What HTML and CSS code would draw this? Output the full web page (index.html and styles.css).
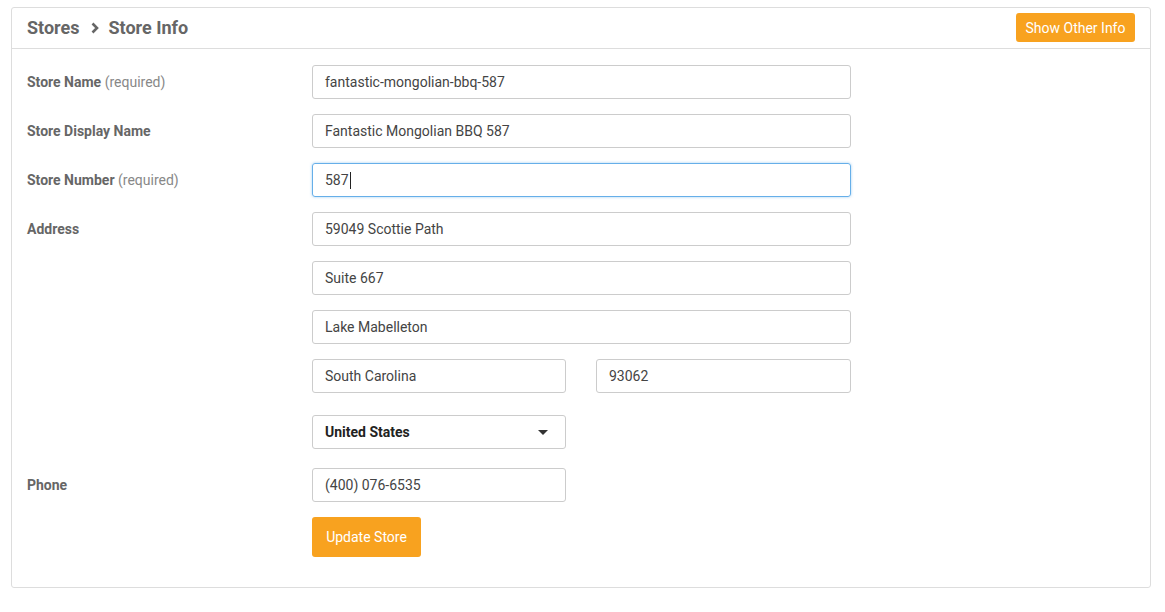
FILE: index.html
```html
<!DOCTYPE html>
<html>
<head>
<meta charset="utf-8">
<link rel="stylesheet" href="styles.css">
</head>
<body>
<div class="panel">
  <div class="panel-head">
    <div class="crumbs">
      <span>Stores</span>
      <svg class="chev" width="10" height="12" viewBox="0 0 10 12"><path d="M2.5 1.5 L7 6 L2.5 10.5" fill="none" stroke="#666" stroke-width="2.6"/></svg>
      <span>Store Info</span>
    </div>
    <button class="btn btn-sm">Show Other Info</button>
  </div>
  <div class="panel-body">
    <div class="row">
      <div class="label">Store Name <span class="req">(required)</span></div>
      <div class="fields"><div class="input">fantastic-mongolian-bbq-587</div></div>
    </div>
    <div class="row">
      <div class="label">Store Display Name</div>
      <div class="fields"><div class="input">Fantastic Mongolian BBQ 587</div></div>
    </div>
    <div class="row">
      <div class="label">Store Number <span class="req">(required)</span></div>
      <div class="fields"><div class="input focus">587<span class="caret"></span></div></div>
    </div>
    <div class="row">
      <div class="label">Address</div>
      <div class="fields">
        <div class="input">59049 Scottie Path</div>
        <div class="input">Suite 667</div>
        <div class="input">Lake Mabelleton</div>
        <div class="pair">
          <div class="input">South Carolina</div>
          <div class="input">93062</div>
        </div>
        <div class="half select-wrap">
          <div class="input select">United States<span class="tri"></span></div>
        </div>
      </div>
    </div>
    <div class="row phone-row">
      <div class="label">Phone</div>
      <div class="fields">
        <div class="half"><div class="input">(400) 076-6535</div></div>
        <div><button class="btn btn-lg">Update Store</button></div>
      </div>
    </div>
  </div>
</div>
</body>
</html>
```
FILE: styles.css
```css
* { box-sizing: border-box; }
html, body { margin: 0; background: #fff; }
body {
  padding: 7px 14px 0 11px;
  font-family: Roboto, "Liberation Sans", sans-serif;
  color: #333;
}
.panel {
  border: 1px solid #ddd;
  border-radius: 3px;
  width: 1140px;
}
.panel-head {
  height: 41px;
  border-bottom: 1px solid #ddd;
  display: flex;
  align-items: center;
  justify-content: space-between;
  padding: 0 15px;
}
.crumbs {
  display: flex;
  align-items: center;
  font-size: 18px;
  font-weight: 700;
  color: #666;
  margin-top: -1px;
}
.chev { margin: 0 9px 0 10px; }
.btn {
  border: none;
  border-radius: 3px;
  background: #f8a21f;
  color: #fff;
  font-family: Roboto, "Liberation Sans", sans-serif;
  font-size: 14px;
  padding: 0 10px;
  cursor: pointer;
}
.btn-sm { height: 29px; margin-top: -1px; width: 119px; padding: 0; }
.btn-lg { height: 40px; width: 109px; padding: 0; }
.panel-body {
  padding: 16px 15px 30px 15px;
}
.row {
  display: grid;
  grid-template-columns: 285px 539px;
  margin-bottom: 15px;
}
.row:last-child { margin-bottom: 0; }
.label {
  font-size: 14px;
  font-weight: 700;
  color: #666;
  line-height: 34px;
  height: 34px;
}
.req { font-weight: 400; color: #888; }
.fields {
  display: flex;
  flex-direction: column;
  gap: 15px;
}
.input {
  height: 34px;
  border: 1px solid #ccc;
  border-radius: 3px;
  padding: 0 12px;
  font-size: 14px;
  line-height: 32px;
  color: #444;
  position: relative;
}
.input.focus {
  border-color: #66afe9;
  box-shadow: 0 0 3px rgba(102,175,233,0.6);
}
.caret {
  display: inline-block;
  width: 1px;
  height: 17px;
  background: #222;
  vertical-align: -4px;
  margin-left: 1px;
}
.pair {
  display: grid;
  grid-template-columns: 254px 255px;
  gap: 30px;
}
.half { width: 254px; }
.select-wrap { margin-top: 7px; }
.select { font-weight: 700; color: #222; }
.tri {
  position: absolute;
  right: 17px;
  top: 14px;
  width: 0; height: 0;
  border-left: 5px solid transparent;
  border-right: 5px solid transparent;
  border-top: 5px solid #333;
}
.phone-row { margin-top: 19px; }
```
